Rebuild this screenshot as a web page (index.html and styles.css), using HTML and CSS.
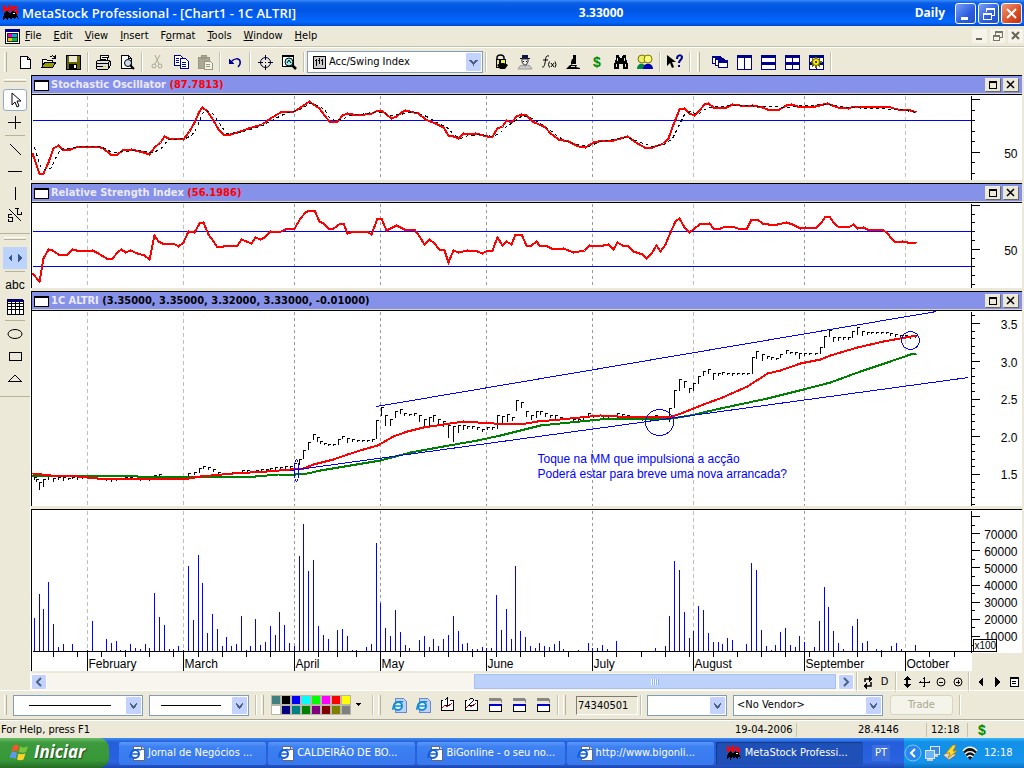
FILE: index.html
```html
<!DOCTYPE html>
<html lang="en">
<head>
<meta charset="utf-8">
<title>MetaStock Professional - [Chart1 - 1C ALTRI]</title>
<link rel="stylesheet" href="styles.css">
</head>
<body>
<svg class="defs" width="0" height="0" aria-hidden="true">
  <symbol id="bug" viewBox="0 0 18 16"><path d="M2 7V1l3 4 3-4v6M15 2h-4v3h4v3h-5" fill="none" stroke="#f00" stroke-width="2"/><path d="M2 8l3-2 3 2 2-2 4 1 1 3 2 4-3-2-1 3-2-3-2 3-2-3-2 4-1-4-3 3z" fill="#000"/><path d="M11 8h2v1h-2z" fill="#fff"/></symbol>
  <symbol id="chev" viewBox="0 0 15 18"><path d="M4 7l3.5 4L11 7" fill="none" stroke="#4d6185" stroke-width="2"/></symbol>
  <symbol id="ie" viewBox="0 0 16 16"><path d="M4 1h8l3 3v11H4z" fill="#fff" stroke="#667"/><path d="M12 1v3h3" fill="#ccd" stroke="#667"/><circle cx="6" cy="9" r="4" fill="#fff" stroke="#1560d8" stroke-width="2"/><path class="soft" d="M3 9h7M1 13C0 7 7 3 12 5" fill="none" stroke="#1560d8" stroke-width="1.500"/></symbol>
  <symbol id="ie2" viewBox="0 0 16 16"><path d="M4 1h8l3 3v11H4z" fill="#bcd2ff" stroke="#6c88c8"/><circle cx="7" cy="9" r="4" fill="#e8f6ff" stroke="#168bd0" stroke-width="2"/><path class="soft" d="M3 9h8M2 13C1 7 8 3 12 5" fill="none" stroke="#168bd0" stroke-width="1.500"/></symbol>
  <symbol id="mini" viewBox="0 0 16 16"><path d="M2 2h12v4" fill="none" stroke="#888"/><path d="M2 1h12v3H2z" fill="#888"/><path d="M2 7h12v7H2z" fill="#fff" stroke="#000"/><path d="M2 7h12v2H2z" fill="#00c"/></symbol>
  <symbol id="max" viewBox="0 0 15 13"><path d="M4 3h7v7H4zM4 4h7" fill="none" stroke="#000"/></symbol>
  <symbol id="cls" viewBox="0 0 15 13"><path class="soft" d="M4 3l7 7M11 3l-7 7" fill="none" stroke="#000" stroke-width="1.500"/></symbol>
</svg>

<header class="titlebar">
  <svg class="app-icon" width="18" height="16"><use href="#bug"/></svg>
  <h1 class="title">MetaStock Professional - [Chart1 - 1C ALTRI]</h1>
  <span class="last-price">3.33000</span>
  <span class="period">Daily</span>
  <div class="window-buttons">
    <button class="wbtn" aria-label="Minimize"><svg width="19" height="19"><path d="M5 13h7v3H5z" fill="#fff"/></svg></button>
    <button class="wbtn" aria-label="Restore"><svg width="19" height="19"><path d="M7 8V4h8v7h-3M7 5h8M4 9h8v6H4zM4 10h8" fill="none" stroke="#fff"/></svg></button>
    <button class="wbtn close" aria-label="Close"><svg width="19" height="19"><path class="soft" d="M5 5l9 9M14 5l-9 9" stroke="#fff" stroke-width="2"/></svg></button>
  </div>
</header>

<nav class="menubar">
  <svg width="16" height="16" viewBox="0 0 16 16"><path d="M1 1h14v14H1z" fill="#fff" stroke="#000"/><path d="M1 1h14v3H1z" fill="#008"/><path d="M3 5h5v4H3z" fill="#e0b"/><path d="M8 5h5v4H8z" fill="#0ad"/><path d="M3 9h5v4H3z" fill="#dc0"/><path d="M8 9h5v4H8z" fill="#0b4"/><path d="M3 5h10v8H3zM3 9h10" fill="none" stroke="#222"/></svg>
  <button><u>F</u>ile</button><button><u>E</u>dit</button><button><u>V</u>iew</button><button><u>I</u>nsert</button><button>F<u>o</u>rmat</button><button><u>T</u>ools</button><button><u>W</u>indow</button><button><u>H</u>elp</button>
  <div class="mdi">
    <button aria-label="Minimize chart"><svg width="15" height="14"><path d="M4 10h6" stroke="#665" stroke-width="2"/></svg></button>
    <button aria-label="Restore chart"><svg width="15" height="14"><path d="M5 6V2h7v6h-3M5 3h7M3 6h6v5H3zM3 7h6" fill="none" stroke="#776"/></svg></button>
    <button aria-label="Close chart"><svg width="15" height="14"><path class="soft" d="M4 3l7 7M11 3l-7 7" stroke="#665" stroke-width="2"/></svg></button>
  </div>
</nav>

<div class="toolbar">
  <i class="grip"></i>
  <button class="tb" aria-label="New"><svg viewBox="0 0 16 16"><path d="M3 2h7l3 3v9H3zM10 2v3h3" fill="#fff" stroke="#000"/></svg></button>
  <button class="tb" aria-label="Open"><svg viewBox="0 0 16 16"><path d="M1 13V5h4l1 1h5v3" fill="#ffe" stroke="#000"/><path d="M1 13l3-5h11l-3 5z" fill="#990" stroke="#000"/><path d="M9 3c2-2 4-1 5 1M14 1v3h-3" fill="none" stroke="#000"/></svg></button>
  <button class="tb" aria-label="Save"><svg viewBox="0 0 16 16"><path d="M1 1h14v14H1z" fill="#660" stroke="#000"/><path d="M4 2h8v6H4z" fill="#ece9d8"/><path d="M4 10h8v5H4z" fill="#000"/><path d="M9 11h2v3H9z" fill="#fff"/></svg></button>
  <i class="sep"></i>
  <button class="tb" aria-label="Print"><svg viewBox="0 0 16 16"><path d="M5 6l1-5h8l-2 5z" fill="#fff" stroke="#000"/><path d="M1 8l2-2h10l2 1v5l-2 3H2l-1-2z" fill="#ddd" stroke="#000"/><path d="M1 9h12v5M2 12h9M13 9l2-2M7 3h5M6 5h5" stroke="#000" fill="none"/><path d="M8 12h3v1H8z" fill="#dd0"/></svg></button>
  <button class="tb" aria-label="Print preview"><svg viewBox="0 0 16 16"><path d="M2 1h7l3 3v10H2zM9 1v3h3" fill="#fff" stroke="#000"/><circle cx="9" cy="9" r="3.500" fill="#cde" stroke="#000"/><path class="soft" d="M11 11l4 4" stroke="#000" stroke-width="2"/></svg></button>
  <i class="sep"></i>
  <button class="tb" aria-label="Cut" disabled><svg viewBox="0 0 16 16"><path class="soft" d="M6 1l4 9M11 1L6 10" stroke="#aaa894" fill="none"/><circle cx="5" cy="12" r="2" fill="none" stroke="#aaa894"/><circle cx="11" cy="12" r="2" fill="none" stroke="#aaa894"/></svg></button>
  <button class="tb" aria-label="Copy"><svg viewBox="0 0 16 16"><path d="M1 1h6l2 2v8H1z" fill="#fff" stroke="#008"/><path d="M7 4h5l3 3v7H7z" fill="#fff" stroke="#008"/><path d="M3 4h3M3 6h3M3 8h3M9 8h4M9 10h4M9 12h4" stroke="#008"/></svg></button>
  <button class="tb" aria-label="Paste" disabled><svg viewBox="0 0 16 16"><path d="M1 3h11v11H1zM4 1h5v3H4z" fill="#aaa894" stroke="#99977f"/><path d="M7 7h6l2 2v6H7z" fill="#f4f2e6" stroke="#99977f"/><path d="M9 10h4M9 12h4" stroke="#99977f"/></svg></button>
  <i class="sep"></i>
  <button class="tb" aria-label="Undo"><svg viewBox="0 0 16 16"><path class="soft" d="M4 8c3-4 8-4 9-1 1 3-1 5-2 6" fill="none" stroke="#009" stroke-width="1.500"/><path d="M2 5v5h5z" fill="#009"/></svg></button>
  <i class="sep"></i>
  <button class="tb" aria-label="Crosshair"><svg viewBox="0 0 16 16"><circle cx="8.500" cy="8.500" r="5" fill="none" stroke="#003"/><path d="M8 1v5M8 11v5M1 8h5M11 8h5M8 8h1" stroke="#003"/></svg></button>
  <button class="tb" aria-label="Zoom"><svg viewBox="0 0 16 16"><path d="M1 1h11v11H1z" fill="#fff" stroke="#000"/><path d="M1 2h11" stroke="#000" stroke-width="2"/><circle cx="8" cy="8" r="4" fill="#9ee" stroke="#000"/><path class="soft" d="M11 11l4 4" stroke="#000" stroke-width="2.500"/><path class="soft" d="M6 9l2-3 2 3" stroke="#000" fill="none"/></svg></button>
  <i class="sep"></i>
  <span class="combo indicator">
    <svg class="lead" width="14" height="14" viewBox="0 0 14 14"><path d="M1 1h12v12H1z" fill="#ccc" stroke="#000"/><path d="M4 4v7M7 3v6M10 4v6M3 5h2M6 5h2M9 5h2" stroke="#000"/></svg>
    <select aria-label="Indicator"><option>Acc/Swing Index</option></select>
    <svg class="arrow" width="15" height="18"><use href="#chev"/></svg>
  </span>
  <i class="sep"></i>
  <button class="tb" aria-label="Security"><svg viewBox="0 0 16 16"><path class="soft" d="M4 6V4c0-4 7-4 7 0v2" fill="none" stroke="#000" stroke-width="1.500"/><path d="M3 5h9v8H3z" fill="#ee4" stroke="#000"/><path class="soft" d="M4 11c3-2 6-3 11 0l-3 4H7z" fill="#000"/><path d="M7 6v4" stroke="#000" stroke-width="2"/></svg></button>
  <button class="tb" aria-label="Expert"><svg viewBox="0 0 16 16"><path d="M5 1h6v3h2v1H3V4h2z" fill="#114"/><path class="soft" d="M5 5h6v3l-2 3H7L5 8z" fill="#eee" stroke="#333"/><path d="M6 7h1M9 7h1" stroke="#000"/><path class="soft" d="M1 15l2-3 4-1 1 2 2-2 3 1 2 3z" fill="#ccc" stroke="#999"/></svg></button>
  <button class="tb" aria-label="Indicator builder"><svg viewBox="0 0 16 16"><path class="soft" d="M8 2c-4-1-3 3-4 7s-1 4-3 4M2 6h5M8.500 7.500q-2 3 0 6M14 7.500q2 3 0 6M10 9l3 4M13 9l-3 4" fill="none" stroke="#000"/></svg></button>
  <button class="tb" aria-label="Explorer"><svg viewBox="0 0 16 16"><path class="soft" d="M8 1h3v9H8zM7 5h2v4l-3 2V8z" fill="#000"/><path class="soft" d="M1 15l4-4h7l-1 2 4 1v1z" fill="#000"/><path d="M6 12h4" stroke="#ddd"/></svg></button>
  <button class="tb dollar" aria-label="System tester">$</button>
  <button class="tb" aria-label="Binoculars"><svg viewBox="0 0 16 16"><path d="M3 1h3l1 3h2l1-3h3v4l2 5v5h-5v-5H6v5H1v-5l2-5z" fill="#000"/><path d="M4 4v3M11 4v3M3 10v3M12 10v3" stroke="#ddd"/></svg></button>
  <button class="tb" aria-label="Community"><svg viewBox="0 0 16 16"><path class="soft" d="M0 15c0-7 9-7 9 0z" fill="#084"/><circle cx="5" cy="5" r="4" fill="#ee6" stroke="#770"/><path class="soft" d="M6 15c0-7 10-7 10 0z" fill="#00b"/><circle cx="11" cy="5" r="4" fill="#ff7" stroke="#770"/></svg></button>
  <i class="sep"></i>
  <button class="tb" aria-label="Context help"><svg viewBox="0 0 16 16"><path class="soft" d="M0 1v11l3-3 2 5 2-1-2-5h4z" fill="#000"/><path class="soft" d="M10 5c0-5 5-4 5-2 0 3-3 3-3 6M12 11v2" fill="none" stroke="#008" stroke-width="2"/></svg></button>
  <i class="sep"></i><i class="grip wide"></i>
  <button class="tb" aria-label="Cascade"><svg viewBox="0 0 16 16"><path d="M0 3h9v6H0z" fill="#fff" stroke="#008"/><path d="M0 2h9v2H0z" fill="#008"/><path d="M3 5h9v6H3z" fill="#fff" stroke="#008"/><path d="M3 4h9v2H3z" fill="#008"/><path d="M6 7h9v6H6z" fill="#fff" stroke="#008"/><path d="M6 6h10v3H6z" fill="#008"/></svg></button>
  <button class="tb" aria-label="Tile columns"><svg viewBox="0 0 16 16"><path d="M1 1h14v14H1zM8 2v13" fill="#fff" stroke="#008"/><path d="M1 2h14" stroke="#008" stroke-width="3"/></svg></button>
  <button class="tb" aria-label="Tile rows"><svg viewBox="0 0 16 16"><path d="M1 1h14v14H1z" fill="#fff" stroke="#008"/><path d="M1 2h14M1 9h14" stroke="#008" stroke-width="3"/></svg></button>
  <button class="tb" aria-label="Tile grid"><svg viewBox="0 0 16 16"><path d="M1 1h14v14H1zM8 2v13" fill="#fff" stroke="#008"/><path d="M1 2h14M1 9h14" stroke="#008" stroke-width="3"/></svg></button>
  <button class="tb" aria-label="Layout options"><svg viewBox="0 0 16 16"><path d="M1 1h14v14H1zM8 2v13" fill="#fff" stroke="#008"/><path d="M1 2h14M1 9h14" stroke="#008" stroke-width="3"/><path d="M8 3v11M3 8h11M4 5l8 7M12 5l-8 7" stroke="#660" stroke-width="2"/><circle cx="8" cy="8" r="3.500" fill="#fe0" stroke="#660"/><circle cx="8" cy="8" r="1" fill="#000"/></svg></button>
  <i class="sep"></i>
</div>

<main class="workspace">
  <aside class="tools" aria-label="Drawing tools">
    <i class="hgrip"></i>
    <button class="tool on" aria-label="Pointer"><svg viewBox="0 0 22 20"><path class="soft" d="M8 3v12l3-3 2 5 2-1-2-5h4z" fill="#fff" stroke="#000"/></svg></button>
    <button class="tool" aria-label="Crosshairs"><svg viewBox="0 0 22 20"><path d="M11 4v13M4 10h13" stroke="#000"/></svg></button>
    <i class="hsep"></i>
    <button class="tool" aria-label="Trendline"><svg viewBox="0 0 22 20"><path d="M6 5l11 11" stroke="#000"/></svg></button>
    <button class="tool" aria-label="Horizontal line"><svg viewBox="0 0 22 20"><path d="M4 10h14" stroke="#000"/></svg></button>
    <button class="tool" aria-label="Vertical line"><svg viewBox="0 0 22 20"><path d="M11 4v13" stroke="#000"/></svg></button>
    <button class="tool" aria-label="Speed lines"><svg viewBox="0 0 22 20"><path d="M5 4l12 12M13 3v6h4v-2M11 3h4M8 9H4v3h4v4H4v-2" fill="none" stroke="#000"/></svg></button>
    <i class="hsep long"></i><i class="hgrip"></i>
    <button class="tool blue" aria-label="Scroll"><svg viewBox="0 0 22 20"><path d="M8 6v8l-4-4zM14 6v8l4-4z" fill="#35598c"/></svg></button>
    <i class="hsep"></i>
    <button class="tool abc">abc</button>
    <button class="tool" aria-label="Grid"><svg viewBox="0 0 22 20"><path d="M3 3h16v14H3zM3 6h16M3 9h16M3 12h16M7 5v12M11 5v12M15 5v12" fill="#fff" stroke="#000"/><path d="M3 3h16" stroke="#006" stroke-width="3"/></svg></button>
    <i class="hsep"></i>
    <button class="tool" aria-label="Ellipse"><svg viewBox="0 0 22 20"><ellipse cx="11" cy="10" rx="7" ry="4.500" fill="none" stroke="#000"/></svg></button>
    <button class="tool" aria-label="Rectangle"><svg viewBox="0 0 22 20"><path d="M5 6h12v8H5z" fill="none" stroke="#000"/></svg></button>
    <button class="tool" aria-label="Triangle"><svg viewBox="0 0 22 20"><path d="M5 13h12l-6-6z" fill="none" stroke="#000"/></svg></button>
    <i class="hsep long"></i>
  </aside>

  <div class="charts">
    <section class="panel">
      <h2 class="panel-head"><i class="doc"></i><span>Stochastic Oscillator <b class="red">(87.7813)</b></span><button aria-label="Maximize"><svg width="15" height="13"><use href="#max"/></svg></button><button aria-label="Close"><svg width="15" height="13"><use href="#cls"/></svg></button></h2>
      <svg class="plot" viewBox="31.500 94.500 990 85">
        <g class="grid" data-top="95" data-bottom="179"></g>
        <path class="level" d="M32 120H971"/>
        <polyline class="red-line" points="32,153 39,173 43,173 48,162 53,148 58,145 63,150 70,149 78,146 97,146 103,148 110,154 117,154 122,150 131,149 143,152 149,154 154,147 160,142 164,136 168,138 183,139 189,131 194,122 199,111 202,107 207,111 213,120 218,129 223,134 230,134 237,132 248,128 262,124 270,118 280,112 294,111 300,107 309,101 313,104 319,108 324,115 329,121 337,121 342,115 347,113 357,115 372,113 377,110 381,110 386,114 391,118 396,116 401,112 405,110 418,113 425,119 435,123 443,127 448,135 453,136 458,138 463,133 468,134 475,133 487,136 492,136 497,128 502,126 506,120 511,122 516,116 521,114 526,115 532,121 545,127 550,133 558,139 568,141 578,146 585,147 593,142 603,140 613,140 627,136 637,143 646,148 652,147 663,143 668,138 673,124 679,109 684,108 689,113 694,115 699,110 704,104 708,103 713,107 726,107 732,104 747,106 752,105 762,107 767,109 779,109 786,105 791,104 797,106 815,106 827,103 837,107 848,108 853,106 887,106 897,109 910,110 916,112"/>
        <polyline class="signal" points="34,147 40,166 46,170 51,167 56,156 60,149 66,148 80,146 100,146 112,152 124,151 140,150 152,152 160,149 168,139 185,138 191,135 196,128 202,113 206,110 213,114 219,123 226,133 240,132 262,125 275,118 285,113 300,109 309,103 318,105 324,109 329,117 334,120 342,119 348,115 360,114 377,111 390,115 400,114 412,111 424,115 430,118 440,124 448,128 453,134 460,138 468,135 480,134 493,136 500,132 506,126 514,121 522,115 530,117 540,123 549,129 556,135 564,140 576,144 588,146 600,141 627,137 640,142 652,146 664,144 672,138 678,126 684,114 690,111 697,114 706,108 714,106 740,105 790,107 800,105 827,104 845,107 900,109 916,112"/>
        <path class="axis" d="M971 95V180M971 99h8M971 152h8M971 110h3M971 120h3M971 131h3M971 141h3M971 162h3M971 173h3"/>
        <text x="1017" y="157" text-anchor="end">50</text>
      </svg>
    </section>

    <section class="panel">
      <h2 class="panel-head"><i class="doc"></i><span>Relative Strength Index <b class="red">(56.1986)</b></span><button aria-label="Maximize"><svg width="15" height="13"><use href="#max"/></svg></button><button aria-label="Close"><svg width="15" height="13"><use href="#cls"/></svg></button></h2>
      <svg class="plot" viewBox="31.500 202.500 990 85">
        <g class="grid" data-top="203" data-bottom="287"></g>
        <path class="level" d="M32 231H971M32 266H971"/>
        <polyline class="red-line" points="32,273 39,281 43,258 48,249 52,250 58,254 67,254 72,249 80,251 92,250 98,253 106,258 112,258 117,252 121,249 125,252 130,250 137,253 144,255 149,259 154,235 158,241 162,243 173,243 178,246 183,242 188,231 194,232 199,223 203,222 208,234 213,241 217,247 223,246 227,245 237,245 241,239 251,243 255,237 260,239 264,237 270,231 278,232 285,229 294,228 300,218 305,212 309,210 314,210 319,221 323,223 328,228 333,228 340,223 343,223 347,233 353,231 367,231 371,234 377,218 381,218 386,230 396,225 404,229 414,229 419,236 424,244 429,239 433,242 439,249 444,250 448,262 453,250 458,252 467,250 477,251 482,253 487,250 492,250 497,237 502,245 506,241 511,244 515,234 521,234 526,245 531,245 536,241 539,245 545,245 553,249 563,248 573,252 584,250 589,245 598,246 608,244 613,249 617,242 622,245 627,245 633,251 642,254 646,258 651,253 656,245 660,251 665,244 670,232 675,221 679,218 684,227 689,232 694,228 699,224 709,223 713,228 720,228 725,226 732,226 737,228 746,229 751,219 757,219 762,223 768,224 777,224 786,222 792,224 800,228 805,227 815,228 821,222 825,216 829,216 833,222 837,226 848,227 853,224 857,228 863,227 867,229 882,229 887,233 891,238 895,242 902,241 907,242 916,243"/>
        <path class="axis" d="M971 203V288M971 205h8M971 249h8M971 214h3M971 222h3M971 231h3M971 240h3M971 258h3M971 266h3M971 275h3M971 284h3"/>
        <text x="1017" y="254" text-anchor="end">50</text>
      </svg>
    </section>

    <section class="panel">
      <h2 class="panel-head"><i class="doc"></i><span>1C ALTRI <b class="black">(3.35000, 3.35000, 3.32000, 3.33000, -0.01000)</b></span><button aria-label="Maximize"><svg width="15" height="13"><use href="#max"/></svg></button><button aria-label="Close"><svg width="15" height="13"><use href="#cls"/></svg></button></h2>
      <svg class="plot" viewBox="31.500 310.500 990 195">
        <g class="grid" data-top="311" data-bottom="505"></g>
        <path id="prices" class="bar"/>
        <polyline class="green-line" points="32,476 77,475 135,475 137,476 255,476 278,474 295,474 307,473 320,470 380,460 410,452 443,446 477,440 500,435 520,430 540,425 560,423 600,419 672,418 690,415 720,408 767,398 803,389 830,382 860,371 890,361 910,354 916,353"/>
        <polyline class="red-line" points="32,473 50,475 77,476 97,478 188,478 200,476 233,473 267,471 290,469 303,468 313,464 333,459 347,454 363,449 377,445 393,436 407,431 423,427 443,424 463,421 477,422 493,423 520,424 537,421 560,419 590,416 600,415 617,416 643,417 672,416 683,412 703,404 722,397 747,386 767,373 780,370 800,363 820,359 830,355 857,347 883,341 916,335"/>
        <path class="level" d="M376 406L936 311M290 470L968 377"/>
        <ellipse class="level" cx="659" cy="422" rx="14" ry="13"/><circle class="level" cx="910" cy="340" r="9"/><ellipse class="level" cx="296" cy="470" rx="2" ry="11"/>
        <text class="note" x="537" y="462">Toque na MM que impulsiona a acção</text>
        <text class="note" x="537" y="477">Poderá estar para breve uma nova arrancada?</text>
        <path class="axis" id="price-axis"/>
        <g text-anchor="end"><text x="1017" y="328">3.5</text><text x="1017" y="366">3.0</text><text x="1017" y="403">2.5</text><text x="1017" y="441">2.0</text><text x="1017" y="478">1.5</text></g>
      </svg>
    </section>

    <section class="panel">
      <svg class="plot" viewBox="31.500 509.500 990 161">
        <path d="M971 652h51v20h-51z" fill="#ece9d8"/>
        <g class="grid" data-top="510" data-bottom="651"></g>
        <path id="volume" class="vol"/>
        <path class="axis" id="time-axis"/>
        <path class="axis" id="volume-axis"/>
        <g id="months"></g>
        <g id="volume-labels" text-anchor="end"></g>
        <path d="M973 639h23v12h-23z" fill="#fff" stroke="#000"/>
        <text class="mult" x="974" y="648">x100</text>
      </svg>
    </section>

    <div class="scroll-row">
      <div class="scrollbar">
        <button class="sbtn" aria-label="Scroll left"><svg width="14" height="14"><path class="soft" d="M9 3L5 7l4 4" fill="none" stroke="#4d6185" stroke-width="2"/></svg></button>
        <div class="track"><div class="thumb"><i></i></div></div>
        <button class="sbtn" aria-label="Scroll right"><svg width="14" height="14"><path class="soft" d="M5 3l4 4-4 4" fill="none" stroke="#4d6185" stroke-width="2"/></svg></button>
      </div>
      <i class="sep"></i>
      <button class="nav" aria-label="Refresh"><svg viewBox="0 0 16 16"><path class="soft" d="M5 8V5h5M11 8v4H6" fill="none" stroke="#000" stroke-width="1.500"/><path d="M9 2l4 3-4 3zM7 9l-4 3 4 3z"/></svg></button>
      <button class="nav">D</button>
      <i class="sep"></i>
      <button class="nav" aria-label="Expand vertically"><svg viewBox="0 0 16 16"><path d="M8 2l4 4H9v4h3l-4 4-4-4h3V6H4z"/></svg></button>
      <button class="nav" aria-label="Move"><svg viewBox="0 0 16 16"><path d="M8 3v10M3 8h11M7 4h2M7 12h2M4 7v2M13 7v2" stroke="#000"/></svg></button>
      <button class="nav" aria-label="Zoom out"><svg viewBox="0 0 16 16"><circle cx="8" cy="8" r="4" fill="none" stroke="#000"/><path d="M6 8h4" stroke="#000"/></svg></button>
      <button class="nav" aria-label="Zoom in"><svg viewBox="0 0 16 16"><circle cx="8" cy="8" r="4" fill="none" stroke="#000"/><path d="M6 8h4M8 6v4" stroke="#000"/></svg></button>
      <i class="sep"></i>
      <button class="nav" aria-label="Previous"><svg viewBox="0 0 16 16"><path d="M11 3v10L6 8z"/></svg></button>
      <button class="nav" aria-label="Next"><svg viewBox="0 0 16 16"><path d="M6 3v10l5-5z"/></svg></button>
      <button class="nav" aria-label="List"><svg viewBox="0 0 16 16"><path d="M4 3h8v9H4zM4 4h8M6 7h4M6 9h4" fill="#fff" stroke="#000"/></svg></button>
    </div>
  </div>
</main>

<div class="toolbar lower">
  <i class="grip"></i>
  <span class="combo line-style"><select aria-label="Line style"><option></option></select><svg class="arrow" width="15" height="17"><use href="#chev"/></svg></span>
  <span class="combo line-weight"><select aria-label="Line weight"><option></option></select><svg class="arrow" width="15" height="17"><use href="#chev"/></svg></span>
  <i class="sep"></i><i class="grip"></i>
  <div class="palette">
    <button class="c1" aria-label="Teal gray"></button><button class="c2" aria-label="Black"></button><button class="c3" aria-label="Blue"></button><button class="c4" aria-label="Cyan"></button><button class="c5" aria-label="Lime"></button><button class="c6" aria-label="Magenta"></button><button class="c7" aria-label="Red"></button><button class="c8" aria-label="Yellow"></button>
    <button class="c9" aria-label="White"></button><button class="c10" aria-label="Navy"></button><button class="c11" aria-label="Teal"></button><button class="c12" aria-label="Green"></button><button class="c13" aria-label="Purple"></button><button class="c14" aria-label="Maroon"></button><button class="c15" aria-label="Olive"></button><button class="c16" aria-label="Gray"></button>
  </div>
  <button class="more" aria-label="More colors"><svg width="8" height="6"><path d="M1 1h6L4 4z"/></svg></button>
  <i class="sep"></i><i class="grip"></i>
  <button class="tb" aria-label="Online"><svg><use href="#ie2"/></svg></button>
  <button class="tb" aria-label="News"><svg><use href="#ie2"/></svg></button>
  <button class="tb" aria-label="Chart 1"><svg viewBox="0 0 16 16"><path d="M4 3H2v10h12V3h-3" fill="#fff" stroke="#000"/><path d="M3 11l3-3 2 2 5-4" stroke="#e00" fill="none"/><path d="M6 3l2-2v7M6 8h4" stroke="#000" fill="none"/></svg></button>
  <button class="tb" aria-label="Chart 2"><svg viewBox="0 0 16 16"><path d="M4 3H2v10h12V3h-2" fill="#fff" stroke="#000"/><path d="M3 11l3-3 2 2 5-4" stroke="#e00" fill="none"/><path d="M6 3l2-2 2 1v2L6 8h5" stroke="#000" fill="none"/></svg></button>
  <button class="tb" aria-label="Window 1"><svg><use href="#mini"/></svg></button>
  <button class="tb" aria-label="Window 2"><svg><use href="#mini"/></svg></button>
  <button class="tb" aria-label="Window 3"><svg><use href="#mini"/></svg></button>
  <i class="sep"></i><i class="grip"></i>
  <input class="account" aria-label="Account" value="74340501">
  <i class="sep"></i>
  <span class="combo order"><select aria-label="Order"><option></option></select><svg class="arrow" width="15" height="17"><use href="#chev"/></svg></span>
  <span class="combo vendor"><select aria-label="Vendor"><option>&lt;No Vendor&gt;</option></select><svg class="arrow" width="15" height="17"><use href="#chev"/></svg></span>
  <button class="trade" disabled>Trade</button>
  <i class="sep"></i>
</div>

<footer class="status">
  <span class="help">For Help, press F1</span>
  <span class="cell date">19-04-2006</span><span class="cell value">28.4146</span><span class="cell time">12:18</span><span class="cell money dollar">$</span>
</footer>

<div class="taskbar">
  <button class="start"><svg width="20" height="18" viewBox="0 0 20 18"><path class="soft" d="M3 3c2-2 4-2 6 0L7.500 9C6 7 4 7 1.500 9z" fill="#f0592a"/><path class="soft" d="M10 3c2 2 5 2 8 0l-2 6c-2 1-5 1-7 0z" fill="#7cc63c"/><path class="soft" d="M1 10c2-2 4-1 6 0l-1.500 6c-2-2-4-2-6 0z" fill="#5c9af0"/><path class="soft" d="M8.500 10.500c2 1 4 1 7 0l-2 6c-2 1-4 1-6.500 0z" fill="#fcd32c"/></svg>Iniciar</button>
  <button class="task"><svg width="16" height="16"><use href="#ie"/></svg>Jornal de Negócios ...</button>
  <button class="task"><svg width="16" height="16"><use href="#ie"/></svg>CALDEIRÃO DE BO...</button>
  <button class="task"><svg width="16" height="16"><use href="#ie"/></svg>BiGonline - o seu no...</button>
  <button class="task"><svg width="16" height="16"><use href="#ie"/></svg>http://www.bigonli...</button>
  <button class="task active"><svg width="16" height="16"><use href="#bug"/></svg>MetaStock Professi...</button>
  <span class="lang">PT</span>
  <div class="tray">
    <button class="chevron" aria-label="Show hidden icons"><svg width="18" height="18"><circle cx="9" cy="9" r="8" fill="#2a86ea" stroke="#7cc6ff"/><path class="soft" d="M11 5L7 9l4 4" fill="none" stroke="#fff" stroke-width="2"/></svg></button>
    <svg width="16" height="16"><path d="M6 1h9v8H6z" fill="#3a88e0" stroke="#dfe8f4"/><path d="M1 5h9v8H1z" fill="#6bb4f0" stroke="#dfe8f4"/><path d="M3 15h6M11 11h3" stroke="#ccc" stroke-width="2"/></svg>
    <svg width="18" height="16"><path class="soft" d="M1 10l7-4 6 4-7 5z" fill="#ddd" stroke="#777"/><path class="soft" d="M11 0L4 8h4l-2 5 9-7h-4l3-6z" fill="#fd3" stroke="#b80"/></svg>
    <svg width="16" height="16"><path class="soft" d="M1 6c4-5 10-5 14 0L8 15z" fill="#111"/><path class="soft" d="M1 6c4-5 10-5 14 0M3 9c3-3 7-3 10 0M5 12c2-2 4-2 6 0" fill="none" stroke="#fff" stroke-width="1.500"/></svg>
    <span class="clock">12:18</span>
  </div>
</div>
<script src="charts.js"></script>
</body>
</html>
```
FILE: styles.css
```css
* { box-sizing: border-box; }
body {
  margin: 0;
  min-height: 100vh;
  display: flex;
  flex-direction: column;
  background: #ece9d8;
  color: #000;
  font: 11px/14px "DejaVu Sans Condensed", "Noto Sans", sans-serif;
}
button, select, input { font: inherit; color: inherit; margin: 0; padding: 0; }
button { border: 0; background: none; }
h1, h2 { margin: 0; font-size: inherit; }
svg { flex: none; display: block; shape-rendering: crispEdges; }
circle, ellipse, .soft { shape-rendering: auto; }
i { flex: none; }
.defs { position: absolute; }

.titlebar {
  display: grid;
  grid-template-columns: 20px 557fr 336fr auto auto;
  align-items: center;
  height: 26px;
  padding: 0 2px;
  color: #fff;
  font: bold 12px/16px "Open Sans", sans-serif;
  background: linear-gradient(#3b8cf8 0, #0a5fe8 3px, #0054e3 10px, #0468ff 22px, #0048c8 26px);
}
.titlebar .title { font-size: 13px; font-weight: 600; white-space: nowrap; }
.titlebar .period { margin-right: 10px; }
.window-buttons { display: flex; gap: 2px; }
.wbtn { width: 21px; height: 21px; border: 1px solid #fff; border-radius: 3px; background: linear-gradient(135deg, #7ba0f4, #2a5ce0 60%, #2450c8); }
.wbtn.close { background: linear-gradient(135deg, #f09878, #dc4c24 60%, #b83410); }

.menubar { display: flex; align-items: center; height: 21px; padding-left: 4px; border-bottom: 1px solid #c5c2a8; }
.menubar > button { padding: 0 6px; height: 18px; }
.menubar > svg { margin-right: -1px; }
.mdi { display: flex; gap: 3px; margin-left: auto; padding-right: 1px; }
.mdi button { background: #f6f4ea; width: 15px; height: 14px; }

.toolbar { display: flex; align-items: center; height: 28px; padding-left: 4px; border-top: 1px solid #fff; }
.grip { width: 3px; height: 20px; margin-right: 6px; border-right: 1px solid #b8b49a; border-left: 1px solid #fff; }
.grip.wide { margin: 0 8px 0 4px; }
.sep { width: 2px; height: 20px; margin: 0 2px; border-left: 1px solid #c5c2b0; border-right: 1px solid #fff; }
.tb { width: 24px; height: 24px; display: flex; align-items: center; justify-content: center; flex: none; }
.tb svg { width: 16px; height: 16px; }
.dollar { color: #008a00; font: bold 14px/16px "Liberation Sans", sans-serif; }
.combo { position: relative; display: flex; align-items: center; background: #fff; border: 1px solid #7f9db9; flex: none; }
.combo select { appearance: none; border: 0; background: transparent; width: 100%; height: 100%; padding: 0 18px 0 3px; }
.arrow { position: absolute; right: 1px; top: 1px; bottom: 1px; background: #c3d3fd; border-radius: 1px; }
.indicator { width: 176px; height: 22px; }
.indicator .lead { margin-left: 4px; }

.workspace { display: flex; flex: 1; align-items: stretch; }
.tools { width: 31px; flex: none; display: flex; flex-direction: column; padding-top: 3px; border-right: 1px solid #fff; }
.hgrip { height: 3px; margin: 1px 4px 7px; border-top: 1px solid #fff; border-bottom: 1px solid #b8b49a; }
.hsep { height: 1px; margin: 2px 5px; background: #b8b49a; }
.hsep.long { margin: 7px 0 2px; }
.tool { width: 24px; height: 22px; margin-left: 3px; border: 1px solid transparent; display: flex; align-items: center; justify-content: center; flex: none; }
.tool svg { width: 22px; height: 20px; }
.tool.on { background: #fff; border-color: #94acc8; border-radius: 3px; }
.tool.blue { background: #bcd3fb; }
.tool.abc { font: 12px/14px "Liberation Sans", sans-serif; }

.charts { flex: 1; min-width: 0; padding-right: 2px; }
.panel { border-top: 1px solid #000; margin-bottom: 3px; }
.panel:nth-of-type(4) { margin-bottom: 2px; }
.panel-head { display: flex; align-items: center; gap: 3px; height: 19px; padding: 0 4px 0 2px; border-left: 1px solid #000; border-bottom: 1px solid #000; background: #8691ea; color: #eceaf8; font-weight: bold; box-shadow: inset 0 -1px #d8d6c8; }
.panel-head span { flex: 1; margin-left: -1px; white-space: nowrap; }
.panel-head button { width: 15px; height: 13px; background: #ece9d8; box-shadow: 1px 1px #666; margin-top: -2px; }
.doc { width: 15px; height: 11px; background: #fff; border: 1px solid #000; border-top-width: 2px; }
.red { color: #f00; }
.black { color: #000; }
.plot { width: 100%; height: auto; border-left: 1px solid #000; background: #fff; font: 12px "Liberation Sans", sans-serif; overflow: hidden; }
.grid path { fill: none; stroke: #c0c0c0; stroke-dasharray: 4 3; }
.grid .dark { stroke: #999; stroke-dasharray: 3 3; }
.level { fill: none; stroke: #00f; shape-rendering: crispEdges; }
.axis, .bar { fill: none; stroke: #000; }
.vol { fill: none; stroke: #00f; }
.red-line { fill: none; stroke: #f00; stroke-width: 2; }
.green-line { fill: none; stroke: #008000; stroke-width: 2; }
.signal { fill: none; stroke: #000; stroke-dasharray: 3 3; }
.note { fill: #00f; }
.mult { font-size: 10px; }

.scroll-row { display: flex; align-items: center; height: 17px; }
.scrollbar { display: flex; flex: 1; align-items: center; background: #f7f5ee; height: 17px; }
.sbtn { width: 16px; height: 16px; background: #c3d3fd; border: 1px solid #fff; border-radius: 2px; }
.track { flex: 1; display: flex; height: 17px; padding: 1px 2px; }
.thumb { margin-left: auto; width: 46%; background: #bcd2fb; border: 1px solid #a8c0ee; display: flex; align-items: center; justify-content: center; }
.thumb i { width: 8px; height: 6px; background: repeating-linear-gradient(90deg, #fff 0 1px, #8cb0f8 1px 2px); }
.scroll-row .sep { margin: 0 1px 0 2px; }
.nav { width: 17px; height: 16px; display: flex; justify-content: center; align-items: center; flex: none; }
.nav svg { width: 16px; height: 16px; }

.lower { height: 30px; border-bottom: 1px solid #aca899; }
.lower .sep + .grip { margin: 0 6px 0 2px; }
.line-style { width: 130px; height: 21px; margin-right: 6px; background: linear-gradient(#000, #000) 15px 9px / 82px 1px no-repeat #fff; }
.line-weight { width: 100px; height: 21px; margin-right: 4px; background: linear-gradient(#000, #000) 11px 9px / 60px 1px no-repeat #fff; }
.palette { display: grid; grid-template-columns: repeat(8, 8px); gap: 2px; margin-left: 2px; }
.palette button { width: 8px; height: 8px; outline: 1px solid #b8b8a8; }
.c1 { background: #408080; } .c2 { background: #000; } .c3 { background: #00f; } .c4 { background: #0ff; }
.c5 { background: #0f0; } .c6 { background: #f0f; } .c7 { background: #f00; } .c8 { background: #ff0; }
.c9 { background: #fff; } .c10 { background: #000080; } .c11 { background: #008080; } .c12 { background: #008000; }
.c13 { background: #800080; } .c14 { background: #800000; } .c15 { background: #808000; } .c16 { background: #808080; }
.more { width: 10px; margin: 0 6px 0 4px; }
.account { width: 62px; height: 19px; padding: 0 1px; margin-left: 4px; background: #ece9d8; border: 1px solid #fff; border-top-color: #807c6c; border-left-color: #807c6c; }
.order { width: 80px; height: 21px; margin: 0 6px 0 3px; }
.vendor { width: 150px; height: 21px; }
.trade { width: 63px; height: 20px; margin: 0 4px 0 7px; border: 1px solid #d8d5c2; border-radius: 3px; background: #f5f4ea; color: #a9a690; }

.status { display: flex; align-items: center; height: 18px; padding: 0 1px; border-top: 1px solid #fff; }
.status .help { flex: 1; }
.cell { border-right: 1px solid #c5c2b0; }
.date { width: 62px; }
.value { width: 130px; padding-left: 61px; }
.time { width: 41px; padding-left: 4px; }
.money { width: 55px; padding-left: 10px; border: 0; }

.taskbar { display: flex; align-items: center; height: 30px; color: #fff; background: linear-gradient(#3f8cf3 0, #245edb 4px, #2a62e0 24px, #1c46b0 30px); }
.start { width: 109px; height: 30px; margin-right: 10px; padding: 0 0 2px 10px; display: flex; align-items: center; gap: 4px; border-radius: 0 10px 10px 0; background: linear-gradient(#6cbb6a 0, #3c9a3c 5px, #389838 22px, #246c24 30px); font: italic bold 17px/20px "Open Sans", sans-serif; text-shadow: 1px 1px 1px #1a4a1a; }
.task { flex: 1; min-width: 0; height: 23px; margin-right: 2px; padding-left: 10px; display: flex; align-items: center; gap: 3px; border-radius: 2px; background: linear-gradient(#5a98fa, #3c80f2 5px, #3878ee); white-space: nowrap; overflow: hidden; }
.task.active { background: #1e50b8; box-shadow: inset 1px 1px 1px #123a88; }
.lang { margin: 0 14px 0 7px; padding: 1px 3px; background: #3c6fdc; }
.tray { display: flex; align-items: center; gap: 2px; width: 120px; height: 30px; background: linear-gradient(#38b8f8 0, #1290e8 4px, #1494ec 24px, #0c70c0 30px); }
.clock { margin-left: 4px; }
```
FILE: charts.js
```js
const draw = (id, d) => document.getElementById(id).setAttribute('d', d);
const svgNode = (parent, tag, attrs, text) => {
  const node = document.createElementNS('http://www.w3.org/2000/svg', tag);
  for (const key in attrs) node.setAttribute(key, attrs[key]);
  if (text) node.textContent = text;
  parent.append(node);
};

const months = [[87, 'February'], [183, 'March'], [294, 'April', 1], [380, 'May', 1], [486, 'June', 1], [592, 'July', 1], [693, 'August'], [804, 'September', 1], [905, 'October']];

document.querySelectorAll('.grid').forEach(g => {
  for (const [x, , dark] of months) {
    svgNode(g, 'path', { d: `M${x} ${g.dataset.top}V${g.dataset.bottom}`, class: dark ? 'dark' : '' });
  }
});

// Each bar: x, high, low
const prices = [
  [34,476,479],[36,478,481],[39,481,489],[43,478,486],[48,475,479],[53,477,481],[58,476,479],[63,476,480],[68,477,479],[72,476,478],[77,476,479],[82,476,478],
  [87,476,478],[92,476,478],[97,477,479],[102,477,479],[106,478,480],[111,478,481],[116,477,480],[121,477,479],[125,476,478],[130,476,478],[135,477,479],[140,477,480],[145,477,479],[149,477,480],[154,474,479],[159,473,476],[164,475,478],[169,476,478],[173,476,478],[178,476,478],[183,476,478],
  [188,472,476],[194,471,474],[199,467,472],[203,465,468],[208,466,469],[213,468,471],[218,471,474],[222,472,474],[227,472,474],[232,471,474],[237,471,473],[242,469,472],[247,469,472],[251,470,472],[256,469,471],[261,468,471],[266,468,470],[270,467,470],[275,466,469],[280,466,468],[285,465,468],[290,465,468],[294,462,469],
  [299,458,464],[303,449,458],[308,441,449],[313,433,439],[317,436,441],[320,440,443],[324,442,444],[328,443,445],[333,443,445],[338,438,444],[342,435,438],[347,437,442],[352,438,441],[357,439,441],[362,439,441],[367,439,441],[372,438,441],[376,419,438],
  [381,406,415],[385,414,425],[390,418,425],[395,410,417],[400,408,413],[404,412,415],[409,413,415],[414,412,415],[419,414,421],[424,418,426],[429,416,426],[433,414,421],[438,418,423],[443,420,426],[448,424,437],[453,425,441],[458,424,432],[463,424,429],[467,425,428],[472,425,428],[477,426,429],[482,428,431],[487,426,429],[492,426,429],
  [497,414,428],[502,415,422],[507,413,421],[512,416,420],[516,399,410],[521,401,407],[526,410,416],[531,414,419],[536,410,417],[540,410,414],[545,412,416],[550,414,417],[555,414,418],[560,416,419],[573,418,421],[578,418,420],[583,416,419],[588,412,417],[593,414,417],[603,415,418],[608,414,418],[617,412,418],[622,413,417],[627,414,417],[632,415,418],[642,416,420],[650,417,420],[655,414,418],[660,415,418],
  [669,407,421],[674,389,407],[679,378,390],[684,380,387],[689,387,392],[693,382,390],[698,375,383],[703,370,375],[708,368,373],[713,372,379],[718,372,375],[722,371,374],[727,372,374],[732,372,375],[737,372,374],[742,372,374],[747,372,374],[752,356,373],[756,350,358],[762,353,360],[767,355,358],[771,356,359],[776,357,359],[780,353,357],[786,349,353],[790,351,353],[795,351,354],[799,352,358],[804,352,355],[809,352,354],[815,352,354],
  [820,346,353],[824,335,347],[829,329,336],[833,336,341],[838,336,340],[843,336,339],[848,336,339],[852,330,337],[857,326,334],[862,330,335],[867,331,334],[871,331,333],[876,331,333],[881,331,333],[886,331,333],[890,332,335],[895,333,336],[900,334,338],[905,334,337],[910,335,338],[915,334,337]
];
draw('prices', prices.map(([x, high, low]) => `M${x} ${high}V${low}M${x - 1} ${low - 1}h1M${x} ${high + 1}h2`).join(''));

// x and top of each volume bar
const volume = '34,617 39,593 43,608 48,581 53,623 58,646 63,643 67,650 72,643 77,650 87,649 92,620 97,650 106,638 111,642 116,640 120,649 125,649 130,643 135,647 140,648 145,643 149,647 154,592 159,616 164,624 169,648 173,648 178,645 183,649 188,565 193,619 198,554 202,582 207,632 212,613 217,628 222,645 226,636 231,645 236,643 241,615 246,649 250,645 255,618 260,644 265,641 270,625 275,634 279,611 284,624 289,642 294,645 299,555 303,523 308,570 313,559 318,625 323,634 328,638 332,650 337,629 342,628 347,635 352,649 356,649 361,650 366,646 371,643 376,542 380,602 385,627 390,635 395,609 400,631 405,644 409,647 419,639 424,635 429,646 433,638 438,645 443,638 448,634 453,615 458,630 462,643 467,642 472,648 477,648 482,646 486,647 491,647 496,594 501,629 506,608 511,638 515,565 520,630 525,636 530,645 535,647 539,642 544,645 549,646 554,643 559,640 563,648 578,649 583,650 588,642 592,647 597,647 602,644 607,648 616,640 631,650 636,650 645,650 655,647 665,645 669,615 674,560 679,569 684,611 689,637 693,630 698,605 703,609 708,632 713,641 718,641 722,643 727,637 732,639 742,650 746,643 751,562 756,569 761,629 766,645 771,649 775,644 780,631 785,627 790,644 795,646 799,635 804,641 809,650 814,646 819,620 824,586 828,606 833,630 838,642 843,648 852,625 857,618 862,642 867,640 876,648 881,649 886,650 891,645 896,642 901,648 910,650 915,644';
draw('volume', volume.split(' ').map(p => { const [x, y] = p.split(','); return `M${x} 651V${y}`; }).join(''));

const weeks = [53,77,101,125,149,173,198,222,246,270,318,337,356,400,424,448,472,496,520,544,568,616,641,665,689,713,737,761,785,809,833,857,881,929,954];
draw('time-axis', 'M32 651H972' + weeks.map(x => `M${x} 651v5`).join('') + months.map(m => `M${m[0]} 651v20`).join(''));
for (const [x, name] of months) svgNode(document.getElementById('months'), 'text', { x: x + 1, y: 667 }, name);

let priceAxis = 'M971 311V506';
for (let i = -1; i <= 24; i++) priceAxis += `M971 ${Math.round(323 + i * 7.55)}h${i % 5 === 0 ? 8 : 3}`;
draw('price-axis', priceAxis);

let volumeAxis = 'M971 510V652';
for (let i = 0; i <= 15; i++) volumeAxis += `M971 ${Math.round(516 + i * 8.57)}h${i % 2 ? 3 : 8}`;
draw('volume-axis', volumeAxis);
for (let i = 7; i >= 1; i--) svgNode(document.getElementById('volume-labels'), 'text', { x: 1017, y: 538 + (7 - i) * 17 }, i + '0000');
```
